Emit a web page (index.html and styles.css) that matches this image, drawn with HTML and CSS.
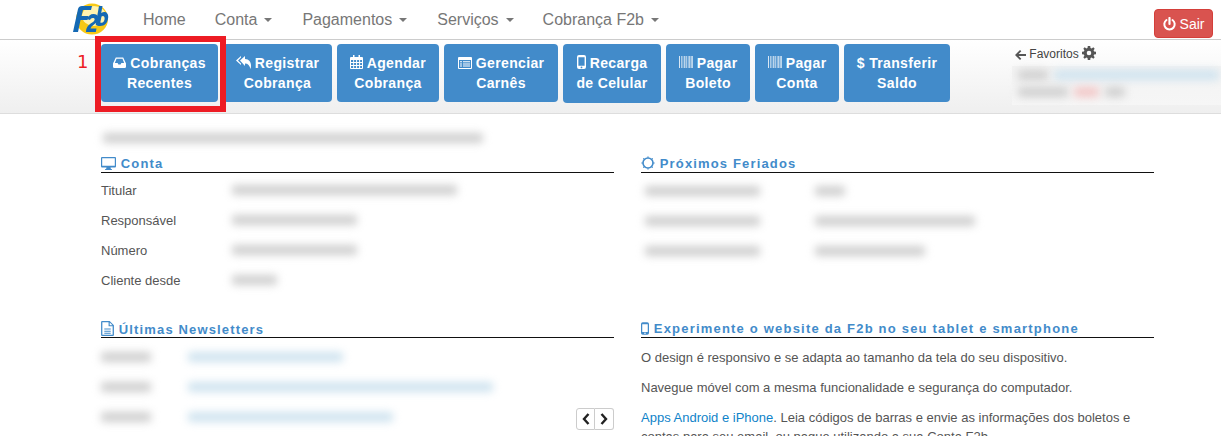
FILE: index.html
```html
<!DOCTYPE html>
<html lang="pt-BR">
<head>
<meta charset="utf-8">
<title>F2b</title>
<link rel="stylesheet" href="styles.css">
</head>
<body>
<svg class="defs" width="0" height="0" aria-hidden="true">
  <symbol id="i-barcode" viewBox="0 0 14 14"><path d="M0 1h1v12H0zM2 1h.7v12H2zM3.6 1h.7v12h-.7zM5.2 1h1.2v12H5.2zM7.2 1h.7v12h-.7zM8.8 1h.7v12h-.7zM10.2 1h1.2v12h-1.2zM12 1h.7v12H12zM13.2 1h.8v12h-.8z"/></symbol>
  <symbol id="i-mobile" viewBox="0 0 9 14"><path fill-rule="evenodd" d="M2 0h5a2 2 0 0 1 2 2v10a2 2 0 0 1-2 2H2a2 2 0 0 1-2-2V2a2 2 0 0 1 2-2zM1.4 2.2v8.6h6.2V2.200zM4.500 11.500a.9.9 0 1 0 0 1.800.9.9 0 0 0 0-1.800z"/></symbol>
  <symbol id="i-gear" viewBox="0 0 14 14"><path fill-rule="evenodd" d="M5.800 0h2.400l.3 1.900 1.200.5L11.300 1.300 12.700 2.700 11.600 4.300l.5 1.200 1.900.3v2.400l-1.900.3-.5 1.200 1.100 1.600-1.400 1.400-1.600-1.100-1.200.5-.3 1.900H5.800l-.3-1.900-1.200-.5-1.600 1.100-1.400-1.400 1.100-1.600-.5-1.200L0 8.200V5.800l1.900-.3.5-1.200L1.300 2.700 2.700 1.300l1.600 1.100 1.200-.5zM7 4.700a2.300 2.300 0 1 0 0 4.600 2.300 2.300 0 0 0 0-4.600z"/></symbol>
</svg>

<header class="navbar">
  <svg class="logo" width="37" height="33" viewBox="0 0 37 33" aria-label="F2b">
    <ellipse cx="20" cy="16" rx="16" ry="15.500" fill="#f7c916"/>
    <ellipse cx="22" cy="13" rx="12" ry="10" fill="#fff3b0"/>
    <path d="M1 29 6 6c.5-2 2-3 4-3h10l-1 4h-8l-1.500 6h7l-1 4h-7L6 29z" fill="#1469b4"/>
    <path d="M14 29c0-6 4-8 7-10 2-1.500 2.500-4-.2-4-1.300 0-2.300.8-2.800 2l-3-1c1-3 3.500-5 6.500-5 5 0 6.500 5 3 8.500-2 2-5 3-6 6h6l-.7 3.500z" fill="#1469b4"/>
    <path d="M27 3h3.500l-1.300 7c3.500-2.500 7.500-.5 7 4.500-.4 5-3.500 8.500-8 8.500-2 0-3.500-.5-4.500-1.500zm2.500 10.500-1.200 6c2.500 1 4-1 4.300-3.500.3-2.500-1.300-3.800-3.100-2.500z" fill="#1469b4"/>
  </svg>
  <nav class="menu">
    <a class="menu-home">Home</a>
    <a class="menu-conta">Conta<i class="caret"></i></a>
    <a class="menu-pag">Pagamentos<i class="caret"></i></a>
    <a class="menu-serv">Serviços<i class="caret"></i></a>
    <a>Cobrança F2b<i class="caret"></i></a>
  </nav>
  <button class="logout">
    <svg width="13" height="14" viewBox="0 0 13 14"><path d="M6.500 1v6" stroke="#fff" stroke-width="2.200" stroke-linecap="round" fill="none"/><path d="M3.500 3a5.200 5.200 0 1 0 6 0" stroke="#fff" stroke-width="2" stroke-linecap="round" fill="none"/></svg>
    Sair
  </button>
</header>

<section class="toolbar">
  <div class="actions">
    <a class="btn b1">
      <span><svg class="ico" width="13" height="12" viewBox="0 0 14 12"><path fill-rule="evenodd" d="M3 0h8l3 6.500V10a1.500 1.500 0 0 1-1.500 1.500h-11A1.500 1.500 0 0 1 0 10V6.500zM3.800 1.500 2 6h3l.8 1.500h2.400L9 6h3l-1.800-4.500z"/></svg> Cobranças</span>
      <span>Recentes</span>
    </a>
    <a class="btn b2">
      <span><svg class="ico" width="15" height="13" viewBox="0 0 15 13"><path d="M5 0v1.500L2 4.500l3 3V9L0 4.500zM9 0v3c4 0 6 3 6 7 0 1-.2 2-.5 3-.8-3.500-2.500-5.500-5.500-5.500V10L4 4.500z"/></svg> Registrar</span>
      <span>Cobrança</span>
    </a>
    <a class="btn b3">
      <span><svg class="ico" width="13" height="14" viewBox="0 0 13 14"><path fill-rule="evenodd" d="M3 0h1.500v2H8.500V0H10v2h2a1 1 0 0 1 1 1v10a1 1 0 0 1-1 1H1a1 1 0 0 1-1-1V3a1 1 0 0 1 1-1h2zM1 5v2h2.200V5zm3.100 0v2h2V5zm3 0v2h2V5zm3 0v2H12V5zM1 8v2h2.200V8zm3.100 0v2h2V8zm3 0v2h2V8zm3 0v2H12V8zM1 11v2h2.200v-2zm3.100 0v2h2v-2zm3 0v2h2v-2zm3 0v2H12v-2z"/></svg> Agendar</span>
      <span>Cobrança</span>
    </a>
    <a class="btn b4">
      <span><svg class="ico" width="14" height="12" viewBox="0 0 14 12"><path fill-rule="evenodd" d="M1 0h12a1 1 0 0 1 1 1v10a1 1 0 0 1-1 1H1a1 1 0 0 1-1-1V1a1 1 0 0 1 1-1zm0 3v8h12V3zm1 1.200h2v1H2zm3 0h7v1H5zM2 6.400h2v1H2zm3 0h7v1H5zM2 8.600h2v1H2zm3 0h7v1H5z"/></svg> Gerenciar</span>
      <span>Carnês</span>
    </a>
    <a class="btn b5">
      <span><svg class="ico" width="9" height="14"><use href="#i-mobile"/></svg> Recarga</span>
      <span>de Celular</span>
    </a>
    <a class="btn b6">
      <span><svg class="ico ico-soft" width="14" height="14"><use href="#i-barcode"/></svg> Pagar</span>
      <span>Boleto</span>
    </a>
    <a class="btn b6">
      <span><svg class="ico ico-soft" width="14" height="14"><use href="#i-barcode"/></svg> Pagar</span>
      <span>Conta</span>
    </a>
    <a class="btn b8">
      <span>$ Transferir</span>
      <span>Saldo</span>
    </a>
  </div>
  <aside class="favorites">
    <div class="fav-title">
      <svg class="fav-ico" width="11" height="10" viewBox="0 0 11 10"><path d="M5 0l1.300 1.300L3.600 4H11v2H3.600l2.700 2.700L5 10 0 5z"/></svg>
      Favoritos
      <svg class="fav-ico" width="14" height="14"><use href="#i-gear"/></svg>
    </div>
    <div class="fav-blur">
      <div class="blur-line"><i class="bar gray w30"></i><i class="bar link w165"></i></div>
      <div class="blur-line"><i class="bar gray w50"></i><i class="bar red w25"></i><i class="bar gray w20"></i></div>
    </div>
  </aside>
</section>

<div class="annotation-frame"></div>
<div class="annotation-num">1</div>

<main class="content">
  <div class="intro"><i class="bar gray w380"></i></div>
  <div class="cols">
    <section class="col">
      <h2 class="head">
        <svg class="head-ico" width="15" height="13" viewBox="0 0 15 13"><path fill-rule="evenodd" d="M1 0h13a1 1 0 0 1 1 1v8.500a1 1 0 0 1-1 1H9.500l.4 1.500h1v1H4.100v-1h1l.4-1.500H1a1 1 0 0 1-1-1V1a1 1 0 0 1 1-1zm.2 1.200v7.600h12.600V1.200z"/></svg>
        Conta
      </h2>
      <dl class="info">
        <div class="row"><dt>Titular</dt><dd><i class="bar gray w225"></i></dd></div>
        <div class="row"><dt>Responsável</dt><dd><i class="bar gray w125"></i></dd></div>
        <div class="row"><dt>Número</dt><dd><i class="bar gray w125"></i></dd></div>
        <div class="row"><dt>Cliente desde</dt><dd><i class="bar gray w45"></i></dd></div>
      </dl>
    </section>
    <section class="col">
      <h2 class="head">
        <svg class="head-ico" width="14" height="14" viewBox="0 0 14 14"><circle cx="7" cy="7" r="5" fill="none" stroke="#428bca" stroke-width="1.600"/><path d="M7 0l1 1.500H6zM7 14l1-1.500H6zM0 7l1.500 1V6zM14 7l-1.500 1V6zM2 2l1.800.4-1.400 1.400zM12 2l-1.800.4 1.400 1.400zM2 12l1.800-.4-1.400-1.400zM12 12l-1.800-.4 1.400-1.400z"/></svg>
        Próximos Feriados
      </h2>
      <div class="holidays">
        <div class="row holiday"><span class="hcol"><i class="bar gray w115"></i></span><i class="bar gray w30"></i></div>
        <div class="row holiday"><span class="hcol"><i class="bar gray w115"></i></span><i class="bar gray w160"></i></div>
        <div class="row holiday"><span class="hcol"><i class="bar gray w115"></i></span><i class="bar gray w110"></i></div>
      </div>
    </section>
    <section class="col">
      <h2 class="head">
        <svg class="head-ico" width="13" height="15" viewBox="0 0 12 14"><path fill-rule="evenodd" d="M1 0h7l4 4v9a1 1 0 0 1-1 1H1a1 1 0 0 1-1-1V1a1 1 0 0 1 1-1zm.2 1.200v11.600h9.600V5H7V1.200zm6.900.3V4h2.500zM3 7h6v1H3zm0 2h6v1H3zm0 2h6v1H3z"/></svg>
        Últimas Newsletters
      </h2>
      <div class="news">
        <div class="row news-row"><span class="ncol"><i class="bar gray w50"></i></span><i class="bar link w155"></i></div>
        <div class="row news-row"><span class="ncol"><i class="bar gray w50"></i></span><i class="bar link w305"></i></div>
        <div class="row news-row"><span class="ncol"><i class="bar gray w50"></i></span><i class="bar link w205"></i></div>
      </div>
      <div class="pager">
        <button class="pager-btn"><svg width="8" height="12" viewBox="0 0 8 12"><path d="M6.500 1 2 6l4.500 5" fill="none" stroke="#222" stroke-width="2.400"/></svg></button><button class="pager-btn pager-next"><svg width="8" height="12" viewBox="0 0 8 12"><path d="M1.500 1 6 6l-4.500 5" fill="none" stroke="#222" stroke-width="2.400"/></svg></button>
      </div>
    </section>
    <section class="col">
      <h2 class="head head-wide">
        <svg class="head-ico" width="8" height="13"><use href="#i-mobile"/></svg>
        Experimente o website da F2b no seu tablet e smartphone
      </h2>
      <div class="copy">
        <p>O design é responsivo e se adapta ao tamanho da tela do seu dispositivo.</p>
        <p>Navegue móvel com a mesma funcionalidade e segurança do computador.</p>
        <p><a class="applink">Apps Android e iPhone</a>. Leia códigos de barras e envie as informações dos boletos e contas para seu email, ou pague utilizando a sua Conta F2b.</p>
      </div>
    </section>
  </div>
</main>
</body>
</html>
```

FILE: styles.css
```css
* { box-sizing: border-box; }
html, body { height: 436px; overflow: hidden; }
body {
  margin: 0;
  position: relative;
  background: #fff;
  color: #555;
  font-family: "Liberation Sans", Arial, sans-serif;
  font-size: 13px;
}
.defs { position: absolute; }

/* navbar */
.navbar {
  height: 40px;
  display: flex;
  align-items: flex-start;
  padding: 3px 8px 0 72px;
  border-bottom: 1px solid #ccc;
  background: #fff;
}
.logo { flex: none; }
.menu {
  display: flex;
  margin-left: 34px;
  padding-top: 6px;
  font-size: 16px;
  line-height: 22px;
  color: #777;
}
.menu-home { margin-right: 29px; }
.menu-conta { margin-right: 30px; }
.menu-pag { margin-right: 30px; }
.menu-serv { margin-right: 29px; }
.caret {
  display: inline-block;
  margin-left: 7px;
  vertical-align: 3px;
  border-top: 4px solid #777;
  border-left: 4px solid transparent;
  border-right: 4px solid transparent;
}
.logout {
  margin: 6px 0 0 auto;
  width: 59px;
  height: 29px;
  padding: 0;
  display: flex;
  align-items: center;
  justify-content: center;
  gap: 4px;
  background: #d9534f;
  border: 1px solid #d43f3a;
  border-radius: 4px;
  color: #fff;
  font: 14px "Liberation Sans", Arial, sans-serif;
}

/* toolbar */
.toolbar {
  height: 74px;
  display: flex;
  align-items: flex-start;
  padding: 4px 0 0 101px;
  background: linear-gradient(#fff, #efefef);
  border-bottom: 1px solid #ddd;
}
.actions { display: flex; gap: 5px; }
.btn {
  display: flex;
  flex-direction: column;
  align-items: center;
  height: 58px;
  padding: 9px 0;
  background: #428bca;
  border-radius: 4px;
  color: #fff;
  font-size: 14px;
  font-weight: 700;
  line-height: 20px;
  letter-spacing: .35px;
  white-space: nowrap;
}
.b1 { width: 117px; }
.b2 { width: 109px; }
.b3 { width: 102px; }
.b4 { width: 114px; }
.b5 { width: 98px; height: 59px; }
.b6 { width: 84px; }
.b8 { width: 106px; }
.ico { fill: #fff; vertical-align: -1px; }
.ico-soft { opacity: .8; }

/* favorites */
.favorites { margin-left: auto; width: 209px; flex: none; }
.fav-title {
  height: 22px;
  padding: 2px 0 0 3px;
  font-size: 12px;
  line-height: 15px;
  color: #444;
}
.fav-ico { fill: #555; vertical-align: -2px; }
.fav-blur {
  height: 39px;
  padding: 0 0 0 6px;
  background: linear-gradient(#f3f3f3, #f6f6f6);
}
.blur-line { display: flex; align-items: center; gap: 6px; height: 17px; }

/* annotation over the first button */
.annotation-frame {
  position: absolute;
  left: 95px;
  top: 36px;
  width: 131px;
  height: 76px;
  border: 6px solid #ed1c24;
}
.annotation-num {
  position: absolute;
  left: 77px;
  top: 51px;
  font-family: "DejaVu Sans", sans-serif;
  font-size: 18px;
  line-height: 22px;
  color: #ed1c24;
}

/* blurred values */
.bar {
  display: block;
  height: 10px;
  border-radius: 3px;
  filter: blur(4px);
  flex: none;
}
.gray { background: #cfcfcf; }
.link { background: #cfe3ef; }
.red { background: #f2c6c6; }
.w20 { width: 20px; } .w25 { width: 25px; } .w30 { width: 30px; }
.w45 { width: 45px; } .w50 { width: 50px; } .w110 { width: 110px; }
.w115 { width: 115px; } .w125 { width: 125px; } .w155 { width: 155px; }
.w160 { width: 160px; } .w165 { width: 165px; } .w205 { width: 205px; }
.w225 { width: 225px; } .w305 { width: 305px; } .w380 { width: 380px; }

/* content */
.content { padding: 0 67px 0 101px; }
.intro { height: 42px; padding-top: 19px; margin-left: 2px; }
.cols {
  display: grid;
  grid-template-columns: 513px 513px;
  column-gap: 27px;
  grid-template-rows: 165px auto;
}
.col { position: relative; min-width: 0; }
.head {
  margin: 0;
  height: 17px;
  font-size: 13px;
  font-weight: 700;
  line-height: 15px;
  letter-spacing: 1.15px;
  color: #428bca;
  border-bottom: 1.500px solid #111;
  white-space: nowrap;
}
.head-wide { letter-spacing: 1.2px; }
.head-ico { fill: #428bca; vertical-align: -2px; }

.info { margin: 0; padding-top: 2px; }
.row { display: flex; align-items: center; height: 30px; }
.info dt { width: 131px; flex: none; color: #555; }
.info dd { margin: 0; }
.holidays { padding-top: 3px; }
.holiday { padding-left: 4px; }
.hcol { width: 170px; flex: none; }
.news { padding-top: 4px; }
.ncol { width: 87px; flex: none; }

.pager {
  position: absolute;
  right: 0;
  top: 87px;
  display: flex;
}
.pager-btn {
  width: 19px;
  height: 22px;
  padding: 0;
  display: flex;
  align-items: center;
  justify-content: center;
  background: #fff;
  border: 1px solid #ccc;
  border-radius: 3px 0 0 3px;
}
.pager-next { border-left: 0; border-radius: 0 3px 3px 0; }

.copy { padding-top: 10px; line-height: 19px; color: #555; }
.copy p { margin: 0 0 11px; }
.applink { color: #0f83c9; }
```
